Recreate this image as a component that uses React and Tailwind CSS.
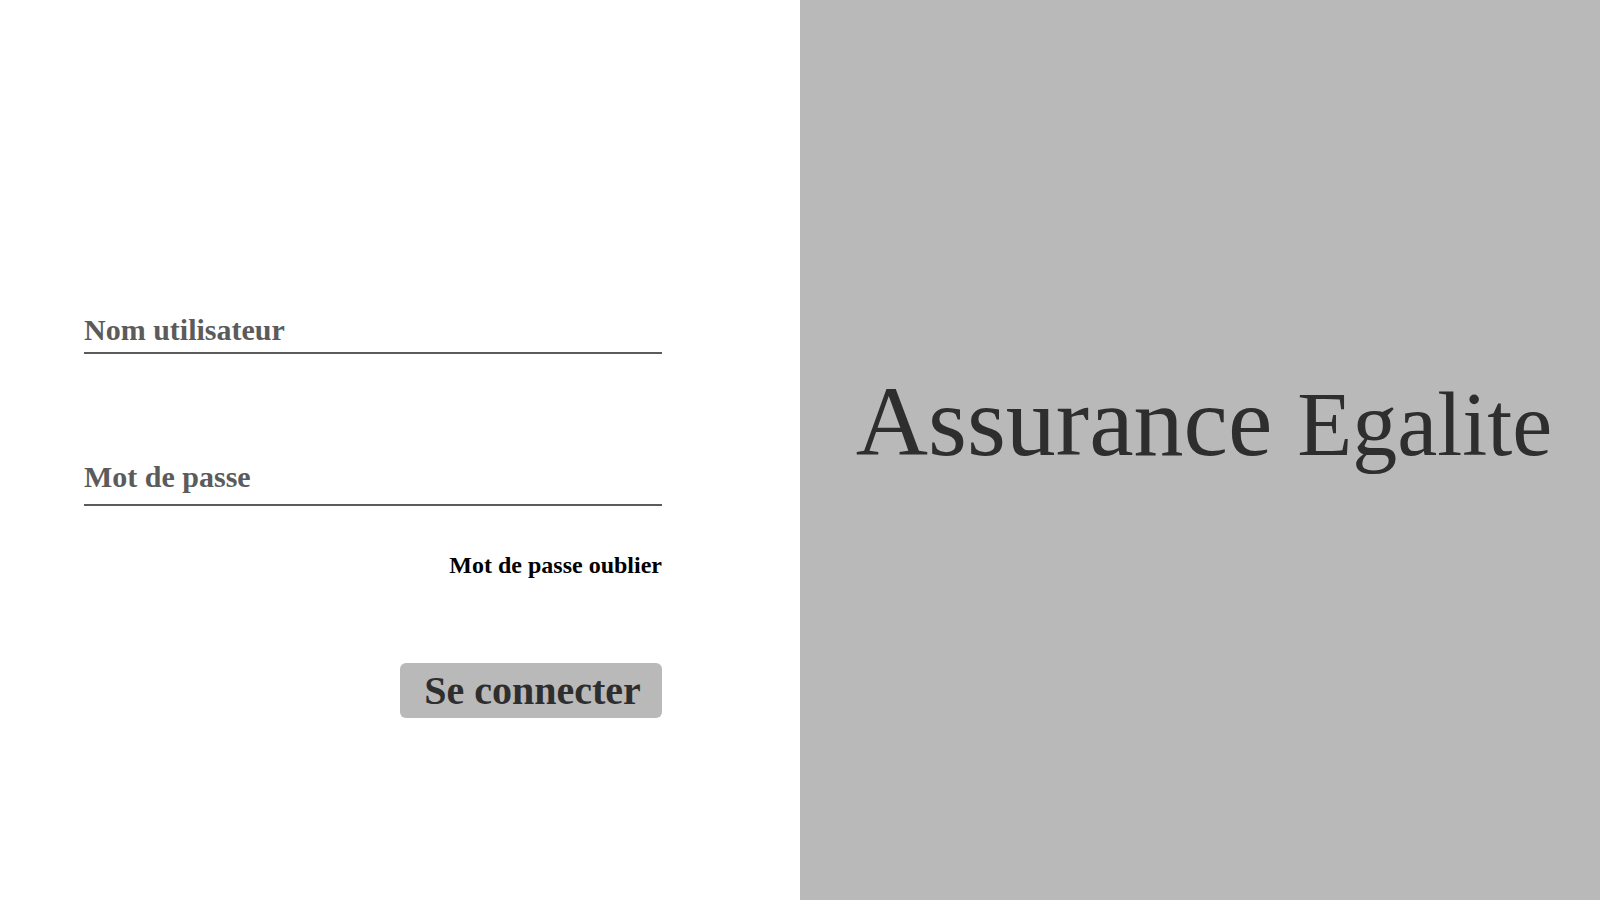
export default function App() {
  return (
    <div className="flex h-[900px] w-full font-['Liberation_Serif',serif]">
      {/* formulaire de connexion */}
      <div className="w-1/2 bg-white pt-[307px] pl-[84px]">
        <form className="flex w-[578px] flex-col" onSubmit={(e) => e.preventDefault()}>
          <input
            type="text"
            name="username"
            placeholder="Nom utilisateur"
            className="h-[47px] border-b-2 border-[#5b5b5b] bg-transparent text-[30px] font-bold text-[#5b5b5b] placeholder:text-[#5b5b5b] outline-none"
          />
          <input
            type="password"
            name="password"
            placeholder="Mot de passe"
            className="mt-[96px] h-[56px] border-b-2 border-[#5b5b5b] bg-transparent text-[30px] font-bold text-[#5b5b5b] placeholder:text-[#5b5b5b] outline-none"
          />
          <a href="#" className="mt-[46px] self-end text-[24px] leading-[normal] font-bold text-black">
            Mot de passe oublier
          </a>
          <button
            type="submit"
            className="mt-[84px] h-[55px] w-[262px] self-end rounded-md bg-[#b9b9b9] pl-[3px] text-[40px] leading-[normal] font-bold text-[#2e2e2e]"
          >
            Se connecter
          </button>
        </form>
      </div>

      <div className="flex w-1/2 items-center justify-center bg-[#b9b9b9] pb-[56px] pl-[8px]">
        <h1 className="text-[100px] leading-none text-[#2e2e2e]">
          Assurance <span className="text-[90px]">Egalite</span>
        </h1>
      </div>
    </div>
  );
}
